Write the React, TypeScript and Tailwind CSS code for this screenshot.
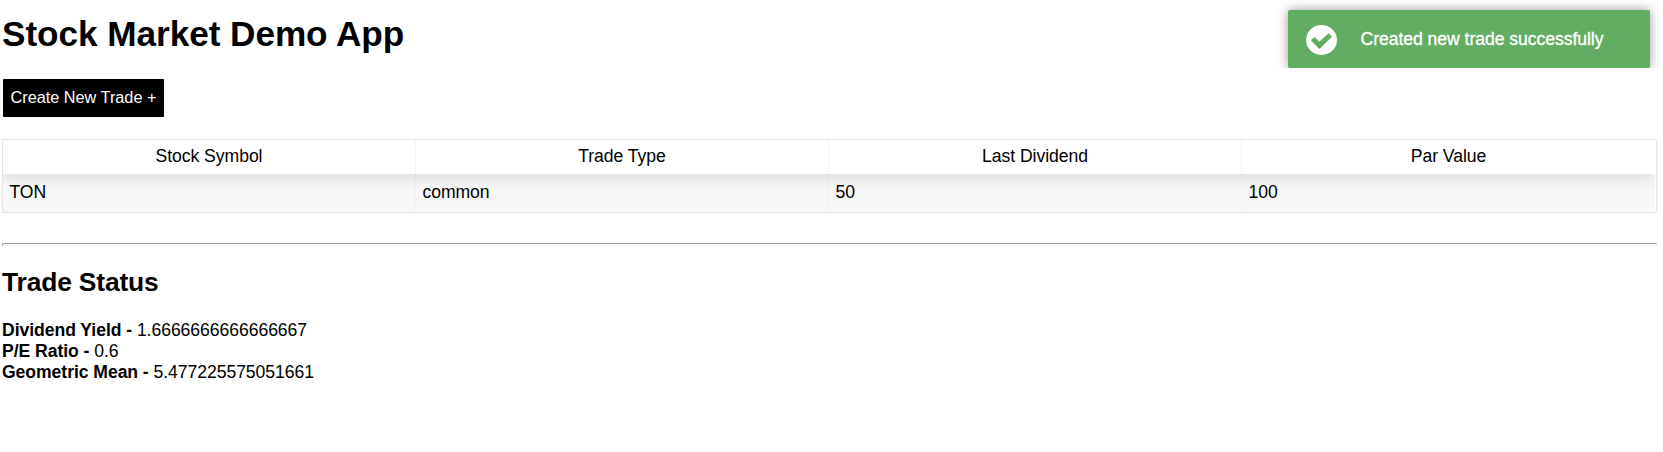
import React from "react";

const columns = ["Stock Symbol", "Trade Type", "Last Dividend", "Par Value"];
const trade = ["TON", "common", "50", "100"];
const status = [
  { label: "Dividend Yield", value: "1.6666666666666667" },
  { label: "P/E Ratio", value: "0.6" },
  { label: "Geometric Mean", value: "5.477225575051661" },
];

function Toast() {
  return (
    <div className="absolute right-0 top-0 flex h-[68px] w-[388px] overflow-hidden pl-[13px] pt-[10px]">
      <div className="flex h-[58px] w-[362px] items-center rounded-[2px] bg-[#62ad64] pl-[18px] text-white shadow-[0_0_11px_rgba(0,0,0,0.4)]">
        <svg className="mt-[2px] h-[30px] w-[31px]" viewBox="0 0 31 30">
          <ellipse cx="15.5" cy="15" rx="15.5" ry="15" fill="#fff" />
          <path
            d="M6.1 15.4 L8.6 13 L13.3 17.8 L22.6 9.2 L24.9 11.4 L13.5 22.9 Z"
            fill="#62ad64"
            stroke="#62ad64"
            strokeWidth="1.5"
            strokeLinejoin="round"
          />
        </svg>
        <span className="ml-[23.5px] whitespace-nowrap tracking-[-0.05px] [-webkit-text-stroke:0.3px_white]">
          Created new trade successfully
        </span>
      </div>
    </div>
  );
}

export default function App() {
  return (
    <div className="relative h-[452px] overflow-hidden bg-white pl-[2px] pr-[6px] font-['Liberation_Sans',Arial,sans-serif] text-[17.6px] leading-[21px] text-black">
      <h1 className="pt-[14px] text-[35.2px] font-bold leading-[40px] tracking-[-0.06px]">Stock Market Demo App</h1>
      <button className="ml-[1px] mt-[25px] flex h-[38px] w-[161px] items-center justify-center whitespace-nowrap rounded-[1px] bg-black pb-[2px] text-[16.25px] text-white">
        Create New Trade +
      </button>
      <div className="mt-[22px] h-[74px] border border-[#e5e5e5]">
        <div className="relative mr-[1px] grid h-[34px] grid-cols-4 bg-white shadow-[0_2px_16px_0_rgba(0,0,0,0.15)] [clip-path:inset(0_0_-20px_0)]">
          {columns.map((name) => (
            <div key={name} className="border-r border-[#f2f2f2] pt-[6px] text-center tracking-[-0.05px] last:border-r-0">
              {name}
            </div>
          ))}
        </div>
        <div className="mr-[1px] grid h-[38px] grid-cols-4 bg-[#f7f7f7]">
          {trade.map((value) => (
            <div key={value} className="border-r border-[#f2f2f2] pl-[6.5px] pt-[8px] tracking-[-0.08px] last:border-r-0">
              {value}
            </div>
          ))}
        </div>
      </div>
      <div className="mt-[30px] h-[3px] border border-b-[#eeeeee] border-l-[#9a9a9a] border-r-[#eeeeee] border-t-[#9a9a9a]" />
      <h2 className="mt-[20px] text-[26.4px] font-bold leading-[32px] tracking-[-0.15px]">Trade Status</h2>
      <div className="mt-[22px] tracking-[-0.06px]">
        {status.map((item) => (
          <div key={item.label}>
            <b>{item.label} - </b>
            {item.value}
          </div>
        ))}
      </div>
      <Toast />
    </div>
  );
}
